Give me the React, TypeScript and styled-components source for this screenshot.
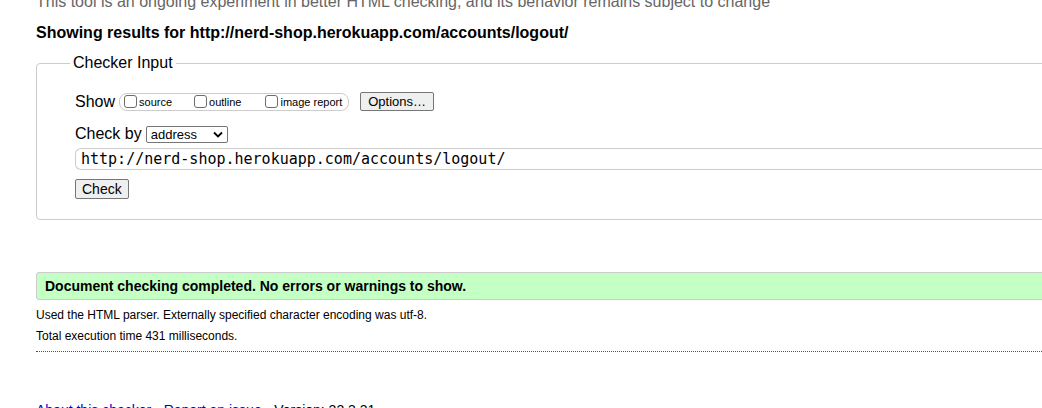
import styled, { createGlobalStyle } from "styled-components";

const GlobalStyle = createGlobalStyle`
  html, body {
    margin: 0;
    padding: 0;
    background: #fff;
    overflow: hidden;
  }
  body {
    font-family: "Liberation Sans", Arial, sans-serif;
    color: #000;
  }
`;

const Page = styled.main`
  width: 1200px;
  padding-left: 36px;
  margin-top: -8px;
`;

const Intro = styled.p`
  margin: 0;
  font-size: 16px;
  line-height: 19px;
  color: #666;
`;

const ResultsFor = styled.h2`
  margin: 12px 0 0;
  font-size: 16px;
  line-height: 19px;
  font-weight: bold;
`;

const Fieldset = styled.fieldset`
  margin: 12px 0 0;
  padding: 20px 0 20px 38px;
  border: 1px solid #ccc;
  border-radius: 4px;
  display: flex;
  flex-direction: column;
`;

const Legend = styled.legend`
  margin-left: -5px;
  padding: 0 3px;
  font-size: 16px;
  line-height: 18px;
`;

const Row = styled.div<{ $mt?: number }>`
  display: flex;
  align-items: center;
  margin-top: ${(p) => p.$mt ?? 0}px;
  font-size: 16px;
`;

const Label = styled.span`
  margin-right: 4px;
`;

const Group = styled.div`
  display: flex;
  align-items: center;
  height: 16px;
  padding: 0 6px 0 4px;
  border: 1px solid #ccc;
  border-radius: 8px;
`;

const Option = styled.label<{ $gap?: number }>`
  display: flex;
  align-items: center;
  font-size: 11px;
  margin-right: ${(p) => p.$gap ?? 0}px;
`;

const Box = styled.span`
  display: inline-block;
  width: 11px;
  height: 11px;
  border: 1px solid #6d6d6d;
  border-radius: 3px;
  margin-right: 2px;
  background: #fff;
`;

const Button = styled.button`
  font-family: "Liberation Sans", Arial, sans-serif;
  font-size: 13px;
  line-height: 15px;
  padding: 1px 6px;
  border: 1px solid #767676;
  border-radius: 2px;
  background: #efefef;
  color: #000;
`;

const OptionsButton = styled(Button)`
  margin-left: 11px;
  height: 19px;
  padding: 0 7px;
`;

const Select = styled.div`
  display: flex;
  align-items: center;
  justify-content: space-between;
  width: 72px;
  height: 15px;
  padding: 0 4px;
  border: 1px solid #767676;
  border-radius: 2px;
  font-size: 13px;
`;

const UrlInput = styled.div`
  height: 20px;
  margin-top: 5px;
  padding: 0 5px;
  border: 1px solid #ccc;
  border-right: none;
  border-radius: 6px 0 0 6px;
  display: flex;
  align-items: center;
  font-family: "DejaVu Sans Mono", monospace;
  font-size: 15px;
`;

const CheckButton = styled(Button)`
  align-self: flex-start;
  margin-top: 9px;
  height: 20px;
  padding: 0 6px;
  font-size: 14px;
`;

const Success = styled.div`
  margin-top: 52px;
  height: 26px;
  padding-left: 8px;
  display: flex;
  align-items: center;
  background: #c4ffc4;
  border: 1px solid #ccc;
  border-radius: 3px;
  font-size: 14px;
  font-weight: bold;
`;

const Detail = styled.p<{ $mt: number }>`
  margin: ${(p) => p.$mt}px 0 0;
  font-size: 12px;
  line-height: 14px;
`;

const Divider = styled.hr`
  margin: 8px 0 0;
  border: none;
  border-top: 1px dotted #555;
`;

const Footer = styled.p`
  margin: 50px 0 0;
  font-size: 14px;
  line-height: 17px;
`;

const Link = styled.a`
  color: #00c;
  text-decoration: underline;
`;

function Chevron() {
  return (
    <svg width="10" height="7" viewBox="0 0 10 7">
      <path d="M1 1.5l4 4 4-4" fill="none" stroke="#000" strokeWidth="1.8" />
    </svg>
  );
}

export default function App() {
  return (
    <>
      <GlobalStyle />
      <Page>
        <Intro>
          This tool is an ongoing experiment in better HTML checking, and its
          behavior remains subject to change
        </Intro>
        <ResultsFor>
          Showing results for http://nerd-shop.herokuapp.com/accounts/logout/
        </ResultsFor>

        <Fieldset>
          <Legend>Checker Input</Legend>
          <Row>
            <Label>Show</Label>
            <Group>
              <Option $gap={22}>
                <Box />
                source
              </Option>
              <Option $gap={24}>
                <Box />
                outline
              </Option>
              <Option>
                <Box />
                image report
              </Option>
            </Group>
            <OptionsButton>Options…</OptionsButton>
          </Row>
          <Row $mt={14}>
            <Label>Check by</Label>
            <Select>
              address
              <Chevron />
            </Select>
          </Row>
          <UrlInput>http://nerd-shop.herokuapp.com/accounts/logout/</UrlInput>
          <CheckButton>Check</CheckButton>
        </Fieldset>

        <Success>
          Document checking completed. No errors or warnings to show.
        </Success>
        <Detail $mt={8}>
          Used the HTML parser. Externally specified character encoding was
          utf-8.
        </Detail>
        <Detail $mt={7}>Total execution time 431 milliseconds.</Detail>
        <Divider />

        <Footer>
          <Link href="#">About this checker</Link> · <Link href="#">Report an issue</Link> ·
          Version: 22.3.31
        </Footer>
      </Page>
    </>
  );
}
